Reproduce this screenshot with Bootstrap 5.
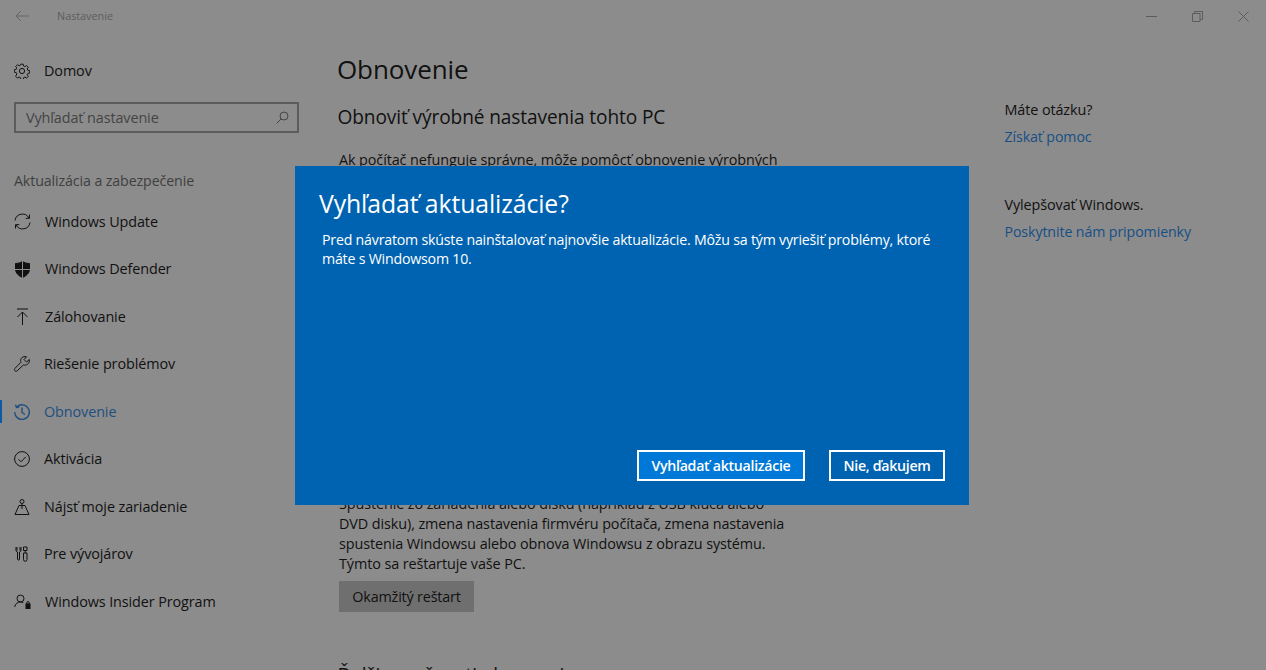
<!DOCTYPE html>
<html lang="sk">
<head>
<meta charset="utf-8">
<title>Nastavenie</title>
<link href="https://cdn.jsdelivr.net/npm/bootstrap@5.3.0/dist/css/bootstrap.min.css" rel="stylesheet">
<style>
html,body{height:670px;overflow:hidden}
body{background:#8c8c8c;color:#111;font-family:"Open Sans","Noto Sans",sans-serif;font-size:14px;position:relative;width:1266px}
svg{display:block;flex:none;fill:none;stroke:currentColor;stroke-width:1}
.titlebar{height:32px;padding-left:15px;color:#666}
.titlebar .ttl{margin-left:28px;font-size:10.8px;color:#5c5c5c}
.winbtns{margin-left:auto;color:#5c5c5c}
.winbtns span{width:46px;display:flex;justify-content:center}
.shell{display:flex}
.side{width:338px;flex:none}
.home{margin-top:27px;padding-left:14px;height:24px;gap:14px;font-size:14.4px;letter-spacing:-.1px}
.searchbox{margin:19px 0 0 14px;width:285px;height:31px;border:2px solid #5c5c5c;padding:0 8px 0 10px;font-size:14.4px;color:#444;letter-spacing:-.1px}
.sect{margin:36px 0 0 14px;height:24px;font-size:14.2px;color:#3f3f3f;letter-spacing:-.1px}
.navitems{margin-top:5px}
.navrow{height:47.5px;padding-left:14px;gap:14px;font-size:14.4px;letter-spacing:-.1px;color:#111;position:relative;text-decoration:none}
.navrow.on{color:#1d4f80}
.navrow.on::before{content:"";position:absolute;left:0;top:12px;width:2px;height:23px;background:#0c5aa6}
.main{width:470px;flex:none;margin-top:18px}
.pg{font-size:26px;font-weight:400;line-height:38px;margin:0 0 0 -1px;color:#111;letter-spacing:-.1px}
.sub{font-size:19.1px;font-weight:400;line-height:26px;margin:16px 0 0 -.5px;letter-spacing:-.1px}
.txt{font-size:14.4px;line-height:20px;margin:0 0 0 1px;letter-spacing:-.1px;color:#111;white-space:nowrap}
.hidden-lines{height:324px}
.rst{margin:7px 0 0 1px;height:31px;width:135px;background:#6f6f6f;border:0;border-radius:0;padding:0;font-size:14.4px;color:#111;letter-spacing:-.2px}
.rst:hover{background:#6f6f6f;color:#111}
.aside-col{margin:68px 0 0 196.5px;width:240px;font-size:14.4px;letter-spacing:-.1px}
.aside-col a{color:#174f85;text-decoration:none;font-size:14.2px}
.aside-col p{margin:0;line-height:20px}
.gap-link{margin-top:7px!important}
.gap-block{margin-top:48px!important}
.dlg{position:absolute;left:295px;top:166px;width:674px;height:339px;background:#0063b1;color:#fff;padding:20px 24px 24px}
.dlg h2{font-size:24.8px;font-weight:400;line-height:34px;margin:0;letter-spacing:-.1px}
.dlg p{font-size:14.2px;line-height:19px;margin:10px 0 0 3px;width:620px;letter-spacing:-.21px}
.dlgbtns{position:absolute;right:24px;bottom:24px;gap:24px}
.dbtn{height:31px;border:2px solid #fff;border-radius:0;color:#fff;background:transparent;padding:1px 0 0;font-size:14.2px;font-weight:600;letter-spacing:-.3px;line-height:1}
.dbtn.pri{background:#0078d7;width:168px}
.dbtn.sec{width:116px}
.dbtn:hover{color:#fff}
.lastsub{margin-top:50px}
</style>
</head>
<body>
<div class="titlebar d-flex align-items-center">
  <svg width="14" height="12" viewBox="0 0 14 12"><path d="M14 6H1M6 1 1 6l5 5"/></svg>
  <span class="ttl">Nastavenie</span>
  <div class="winbtns d-flex align-items-center">
    <span><svg width="11" height="11" viewBox="0 0 11 11"><path d="M0 5.500h11"/></svg></span>
    <span><svg width="11" height="11" viewBox="0 0 11 11"><path d="M.5 2.500h7.500v8H.5zM2.500 2.500V.5h8v8H8"/></svg></span>
    <span><svg width="11" height="11" viewBox="0 0 11 11"><path d="M.5.500l10 10M10.500.500l-10 10"/></svg></span>
  </div>
</div>
<div class="shell">
  <nav class="side">
    <div class="home d-flex align-items-center">
      <svg width="16" height="16" viewBox="0 0 16 16"><circle cx="8" cy="8" r="2.600"/><path d="M6.700.8h2.600l.4 2 1.300.6 1.800-1.100 1.800 1.800-1.100 1.800.6 1.300 2 .4v2.600l-2 .4-.6 1.300 1.100 1.800-1.800 1.800-1.800-1.100-1.300.6-.4 2H6.700l-.4-2-1.300-.6-1.800 1.100-1.800-1.800L2.500 11l-.6-1.300-2-.4V6.700l2-.4.6-1.300-1.100-1.800 1.800-1.800L5 2.500l1.300-.6z" transform="translate(.4 .4) scale(.95)"/></svg>
      <span>Domov</span>
    </div>
    <div class="searchbox d-flex align-items-center justify-content-between">
      <span>Vyhľadať nastavenie</span>
      <svg width="13" height="13" viewBox="0 0 13 13"><circle cx="8" cy="5" r="4"/><path d="M5 8 .8 12.300"/></svg>
    </div>
    <div class="sect d-flex align-items-center">Aktualizácia a zabezpečenie</div>
    <div class="navitems d-flex flex-column">
      <a class="navrow d-flex align-items-center">
        <svg width="17" height="17" viewBox="0 0 17 17"><path d="M1 7.500A7.500 7.500 0 0 1 15 5M16 9.500A7.500 7.500 0 0 1 2 12M15.500 1.500V5.300H11.700M1.500 15.500V11.700H5.300"/></svg>
        <span>Windows Update</span>
      </a>
      <a class="navrow d-flex align-items-center">
        <svg width="17" height="17" viewBox="0 0 17 17"><path d="M8.500 .5C6.500 1.800 4 2.500 1.500 2.500V8c0 4 3 6.800 7 8.500 4-1.700 7-4.500 7-8.500V2.500C13 2.500 10.500 1.800 8.500 .5z" fill="#111" stroke="#111"/><path d="M8.500 0V17M1 8.500H16" stroke="#8c8c8c"/></svg>
        <span>Windows Defender</span>
      </a>
      <a class="navrow d-flex align-items-center">
        <svg width="17" height="17" viewBox="0 0 17 17"><path d="M3 1h11M8.500 17V4M3.500 9l5-5 5 5"/></svg>
        <span>Zálohovanie</span>
      </a>
      <a class="navrow d-flex align-items-center">
        <svg width="16" height="16" viewBox="0 0 16 16"><path d="M15.300 3.500 12.500 6 10 3.500 12.500.9C10.500.1 8 .8 7 2.800c-.6 1.300-.5 2.500 0 3.500L1 12.300c-.8.800-.8 1.700-.2 2.400s1.700.7 2.500 0l6.200-5.800c1.200.4 2.600.3 3.800-.5 1.700-1.200 2.400-3 2-4.900z"/></svg>
        <span>Riešenie problémov</span>
      </a>
      <a class="navrow on d-flex align-items-center">
        <svg width="16" height="16" viewBox="0 0 16 16"><path d="M2.800 3A7.300 7.300 0 1 1 .7 8M1.500 .8 2.500 3.500 5.300 3M8 3.500V8.500L11 10.500" stroke-width="1.400"/></svg>
        <span>Obnovenie</span>
      </a>
      <a class="navrow d-flex align-items-center">
        <svg width="16" height="16" viewBox="0 0 16 16"><circle cx="8" cy="8" r="7.400"/><path d="m4.500 8.300 2.500 2.500 4.800-5"/></svg>
        <span>Aktivácia</span>
      </a>
      <a class="navrow d-flex align-items-center">
        <svg width="16" height="16" viewBox="0 0 16 16"><circle cx="8" cy="2.500" r="2"/><path d="M8 4.500V10M5 6.500h6L15 15.500H1z"/></svg>
        <span>Nájsť moje zariadenie</span>
      </a>
      <a class="navrow d-flex align-items-center">
        <svg width="16" height="16" viewBox="0 0 16 16"><path d="M3.500 1v3.500M6.500 1v3.500M2.500 1v4l1.500 1v7a1 1 0 0 0 2 0V6l1.500-1V1M10 1h3.500v3.500H10zM11.700 4.500V7M10 7h3.500v6.500a1.700 1.700 0 0 1-3.500 0z" transform="translate(-.5 0)"/></svg>
        <span>Pre vývojárov</span>
      </a>
      <a class="navrow d-flex align-items-center">
        <svg width="17" height="16" viewBox="0 0 17 16"><circle cx="6.500" cy="4.500" r="3.500"/><path d="M.7 13c.4-3 2.700-5 5.800-5 1 0 2 .2 2.800.7"/><rect x="12" y="10" width="4" height="4.500" fill="currentColor"/><path d="M12.800 10V8.800a1.200 1.200 0 0 1 2.400 0V10"/></svg>
        <span>Windows Insider Program</span>
      </a>
    </div>
  </nav>
  <main class="main">
    <h1 class="pg">Obnovenie</h1>
    <h2 class="sub">Obnoviť výrobné nastavenia tohto PC</h2>
    <div class="mt-3 pt-1">
      <p class="txt">Ak počítač nefunguje správne, môže pomôcť obnovenie výrobných</p>
    </div>
    <div class="hidden-lines"></div>
    <p class="txt">Spustenie zo zariadenia alebo disku (napríklad z USB kľúča alebo<br>DVD disku), zmena nastavenia firmvéru počítača, zmena nastavenia<br>spustenia Windowsu alebo obnova Windowsu z obrazu systému.<br>Týmto sa reštartuje vaše PC.</p>
    <button class="btn rst" type="button">Okamžitý reštart</button>
    <h2 class="sub lastsub">Ďalšie možnosti obnovenia</h2>
  </main>
  <aside class="aside-col">
    <p>Máte otázku?</p>
    <p class="gap-link"><a href="#">Získať pomoc</a></p>
    <p class="gap-block">Vylepšovať Windows.</p>
    <p class="gap-link"><a href="#">Poskytnite nám pripomienky</a></p>
  </aside>
</div>
<div class="dlg" role="dialog">
  <h2>Vyhľadať aktualizácie?</h2>
  <p>Pred návratom skúste nainštalovať najnovšie aktualizácie. Môžu sa tým vyriešiť problémy, ktoré máte s Windowsom 10.</p>
  <div class="dlgbtns d-flex">
    <button class="btn dbtn pri" type="button">Vyhľadať aktualizácie</button>
    <button class="btn dbtn sec" type="button">Nie, ďakujem</button>
  </div>
</div>
</body>
</html>
